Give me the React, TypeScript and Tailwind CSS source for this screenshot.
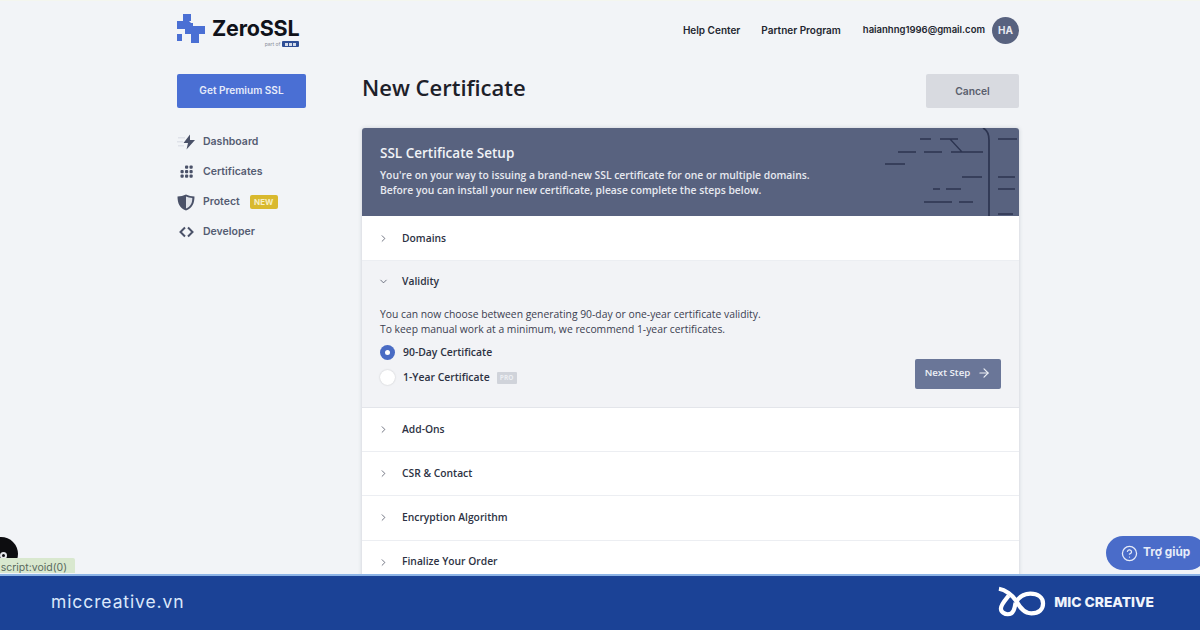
import { ChevronRight, ChevronDown, ArrowRight, CircleHelp } from "lucide-react";

const openSans = "font-['Open_Sans',sans-serif]";

function Logo() {
	return (
		<div className="flex items-start">
			<svg width="28" height="29" viewBox="0 0 28 29" fill="#4a6fd4">
				<path d="M6 0h8v7h-2l2 2h2v3h6v-0h6v8h-6v9h-8v-9H8v-5H0V7h6z" />
				<path d="M0 20h5v7H0z" />
			</svg>
			<div className="ml-[7px] flex flex-col items-end pt-[2px]">
				<div className="text-[21.500px] font-bold leading-[25px] text-[#10121a] font-['Inter',sans-serif] tracking-[-0.2px]">ZeroSSL</div>
				<div className="flex items-center gap-[2px]">
					<span className="text-[5px] leading-[6px] text-[#8a8f9c] font-['Inter',sans-serif]">part of</span>
					<span className="flex h-[6px] w-[17px] items-center justify-center gap-[1px] rounded-[1px] bg-[#2f4f96]">
						<i className="h-[3px] w-[3px] bg-white/80" />
						<i className="h-[3px] w-[3px] bg-white/80" />
						<i className="h-[3px] w-[3px] bg-white/80" />
					</span>
				</div>
			</div>
		</div>
	);
}

function Sidebar() {
	return (
		<aside className="flex w-[129px] shrink-0 flex-col">
			<button className="h-[34px] w-full rounded-[2px] bg-[#4a6fd4] text-[10.100px] font-semibold text-[#e6ebfa] font-['Inter',sans-serif]">
				Get Premium SSL
			</button>
			<nav className="mt-[19px] flex flex-col text-[10.500px] font-semibold text-[#555c72] font-['Inter',sans-serif]">
				<div className="flex h-[30px] items-center gap-[7px]">
					<svg width="19" height="16" viewBox="0 0 19 16">
						<path fill="#dfe2e9" d="M1 3h7v1.500H1zM0 7h6v1.500H0zM1 11h6v1.500H1z" />
						<path fill="#4a5168" d="M13 0.500 6.500 9H11l-1.500 6.500L18 6h-5z" />
					</svg>
					Dashboard
				</div>
				<div className="flex h-[30px] items-center gap-[7px]">
					<svg width="19" height="14" viewBox="0 0 19 14" fill="#4a5168">
						<rect x="8" y="0.500" width="3.200" height="3.200" rx="1" /><rect x="12.500" y="0.500" width="3.200" height="3.200" rx="1" />
						<rect x="3.500" y="5" width="3.200" height="3.200" rx="1" /><rect x="8" y="5" width="3.200" height="3.200" rx="1" /><rect x="12.500" y="5" width="3.200" height="3.200" rx="1" />
						<rect x="3.500" y="9.500" width="3.200" height="3.200" rx="1" /><rect x="8" y="9.500" width="3.200" height="3.200" rx="1" /><rect x="12.500" y="9.500" width="3.200" height="3.200" rx="1" />
					</svg>
					Certificates
				</div>
				<div className="flex h-[30px] items-center gap-[7px]">
					<svg width="19" height="17" viewBox="0 0 19 17">
						<path fill="#4a5168" d="M9 0.500C6.500 1.800 3.500 2.400 0.500 2.500 0.500 9 2.500 14 9 16.500 15.500 14 17.500 9 17.500 2.500 14.500 2.400 11.500 1.800 9 0.500Z" />
						<path fill="#dfe2e9" d="M9 2.500c1.800.8 4 1.300 6.300 1.500 0 4.800-1.500 8.500-6.300 10.500Z" />
					</svg>
					Protect
					<span className="ml-[3px] flex h-[14px] w-[28px] items-center justify-center rounded-[2px] bg-[#d9b92e] text-[8px] font-bold text-[#f7efc6]">NEW</span>
				</div>
				<div className="flex h-[30px] items-center gap-[7px]">
					<svg width="19" height="12" viewBox="0 0 19 12" fill="none" stroke="#4a5168" strokeWidth="2">
						<path d="M8 1.500 3.500 6 8 10.500M11 1.500 15.500 6 11 10.500" />
					</svg>
					Developer
				</div>
			</nav>
		</aside>
	);
}

function Row({ title }: { title: string }) {
	return (
		<div className="flex h-[44.200px] items-center border-b border-[#eceef2] bg-white pl-[16px] text-[10.300px] font-semibold text-[#2d3243]">
			<ChevronRight size={11} strokeWidth={1.700} className="text-[#4b5060]" />
			<span className="ml-[13px]">{title}</span>
		</div>
	);
}

function CardBanner() {
	return (
		<div className="relative h-[88px] overflow-hidden rounded-t-[3px] bg-[#58627f] pl-[18px] pt-[15px] text-white">
			<h2 className="text-[13.500px] font-semibold leading-[20px] text-[#f1f3f7]">SSL Certificate Setup</h2>
			<p className="mt-[5px] text-[10.350px] font-semibold leading-[15px] text-[#e7e9f0]">
				You're on your way to issuing a brand-new SSL certificate for one or multiple domains.
				<br />
				Before you can install your new certificate, please complete the steps below.
			</p>
			<svg width="136" height="89" viewBox="0 0 136 89" className="absolute right-0 top-0" fill="none" stroke="#2c3450" strokeWidth="1.300">
				<path strokeWidth="1.700" d="M100 0c4 2 6 6 6 12v77" />
				<path d="M37 11h11M57 11h18M67 11l12 13M68 24h32M15 24h18M41 24h18M2 36h20M79 49h20M115 11h19M115 49h17M50 61h7M63 61h15M115 61h17M41 74h28M76 74h14M115 86h15" />
			</svg>
		</div>
	);
}

function ValidityPanel() {
	return (
		<div className="h-[147px] border-b border-[#e3e5ea] bg-[#f2f3f6]">
			<div className="flex h-[41px] items-center pl-[16px] text-[10.300px] font-semibold text-[#2d3243]">
				<ChevronDown size={11} strokeWidth={1.700} className="text-[#4b5060]" />
				<span className="ml-[13px]">Validity</span>
			</div>
			<div className="flex items-end justify-between pl-[18px] pr-[18px]">
				<div>
					<p className="mt-[5px] text-[10.350px] leading-[15px] text-[#3b4050]">
						You can now choose between generating 90-day or one-year certificate validity.
						<br />
						To keep manual work at a minimum, we recommend 1-year certificates.
					</p>
					<div className="mt-[8px] flex h-[15px] items-center text-[10.400px] font-semibold text-[#2d3243]">
						<span className="flex h-[15px] w-[15px] items-center justify-center rounded-full bg-[#4a6cc4]">
							<span className="h-[5px] w-[5px] rounded-full bg-white" />
						</span>
						<span className="ml-[8px]">90-Day Certificate</span>
					</div>
					<div className="mt-[10px] flex h-[15px] items-center text-[10.400px] font-semibold text-[#2d3243]">
						<span className="h-[15px] w-[15px] rounded-full bg-white shadow-[0_0_2px_rgba(0,0,0,0.2)]" />
						<span className="ml-[8px]">1-Year Certificate</span>
						<span className="ml-[7px] flex h-[12px] w-[20px] items-center justify-center rounded-[1px] bg-[#d0d3da] text-[6.500px] font-bold text-[#eceef2]">PRO</span>
					</div>
				</div>
				<button className="-mb-[4px] flex h-[30px] w-[86px] items-center justify-center gap-[7px] rounded-[2px] bg-[#6a7698] pb-[2px] text-[9.700px] font-semibold text-[#edf0f6]">
					Next Step
					<ArrowRight size={14} strokeWidth={2} />
				</button>
			</div>
		</div>
	);
}

export default function App() {
	return (
		<div className="relative flex h-[630px] w-[1200px] flex-col overflow-hidden bg-[#f2f4f7]">
			<div className="h-[1px] shrink-0 bg-[#f4f6ee]" />
			<div className="min-h-0 flex-1 overflow-hidden px-[177px] pr-[181px]">
				<header className="flex h-[73px] items-start justify-between pt-[13px]">
					<Logo />
					<div className="flex items-center pt-[3px] text-[9.500px] font-semibold text-[#23262f] font-['Inter',sans-serif]">
						<span className="text-[10px]">Help Center</span>
						<span className="ml-[21px] text-[10px]">Partner Program</span>
						<span className="ml-[22px]">haianhng1996@gmail.com</span>
						<span className="ml-[7px] flex h-[27px] w-[27px] items-center justify-center rounded-full bg-[#58627f] text-[10px] font-bold text-[#e7e9f0]">HA</span>
					</div>
				</header>
				<div className="flex gap-[56px]">
					<Sidebar />
					<main className={`min-w-0 flex-1 ${openSans}`}>
						<div className="flex h-[34px] items-center justify-between">
							<h1 className="-mt-[8px] text-[22px] font-semibold text-[#1d2029]">New Certificate</h1>
							<button className="h-[34px] w-[93px] rounded-[2px] bg-[#d8dae0] pt-[2px] text-[10.300px] font-semibold text-[#5a5f6d] font-['Inter',sans-serif]">Cancel</button>
						</div>
						<section className="mt-[20px] rounded-[3px] shadow-[0_0_4px_rgba(40,50,70,0.18)]">
							<CardBanner />
							<div className="h-[45px] bg-white pt-[1px]"><Row title="Domains" /></div>
							<ValidityPanel />
							<Row title="Add-Ons" />
							<Row title="CSR & Contact" />
							<Row title="Encryption Algorithm" />
							<Row title="Finalize Your Order" />
						</section>
					</main>
				</div>
			</div>
			<footer className="flex h-[56px] shrink-0 items-center justify-between border-t-[2px] border-[#8db4e6] bg-[#1b4296] pb-[2px] pl-[51px] pr-[46px]">
				<span className="text-[17.500px] tracking-[0.9px] text-[#dbe8fb] font-['Inter',sans-serif]">miccreative.vn</span>
				<div className="flex items-center gap-[8px]">
					<svg width="49" height="33" viewBox="2 2 50 32" fill="none" stroke="white" strokeWidth="4.300">
						<path d="M4 4C10 5 18 10 22 17 26 24 30 29 37 29 45 29 49 25 49 19 49 13 44 9 36 9 28 9 24 13 21 18" />
						<path d="M14 11C10 16 6 20 6 24 6 28 10 30 13 30 19 30 20 24 21 18" />
					</svg>
					<span className="text-[13.800px] font-extrabold text-[#f0f4fb] font-['Inter',sans-serif]">MIC CREATIVE</span>
				</div>
			</footer>
			<div className="absolute left-[-16px] top-[537px] h-[34px] w-[34px] rounded-full bg-[#0d0d10]">
				<span className="absolute left-[16px] top-[15px] h-[7px] w-[7px] rounded-full border-[2px] border-[#e4e6ea]" />
			</div>
			<div className="absolute left-0 top-[558px] flex h-[15px] w-[75px] items-start justify-end overflow-hidden whitespace-nowrap rounded-tr-[2px] bg-[#d9e8cf] pr-[8px] pt-[3px] text-[10.500px] leading-[14px] text-[#5a6a5e] font-['Inter',sans-serif]">
				script:void(0)
			</div>
			<button className="absolute left-[1106px] top-[536px] flex h-[34px] w-[100px] items-center gap-[5px] rounded-full bg-[#4a6cc9] pl-[15px] text-[11.800px] font-bold text-[#e6ebf8] font-['Inter',sans-serif]">
				<CircleHelp size={17} strokeWidth={1.800} />
				Trợ giúp
			</button>
		</div>
	);
}
